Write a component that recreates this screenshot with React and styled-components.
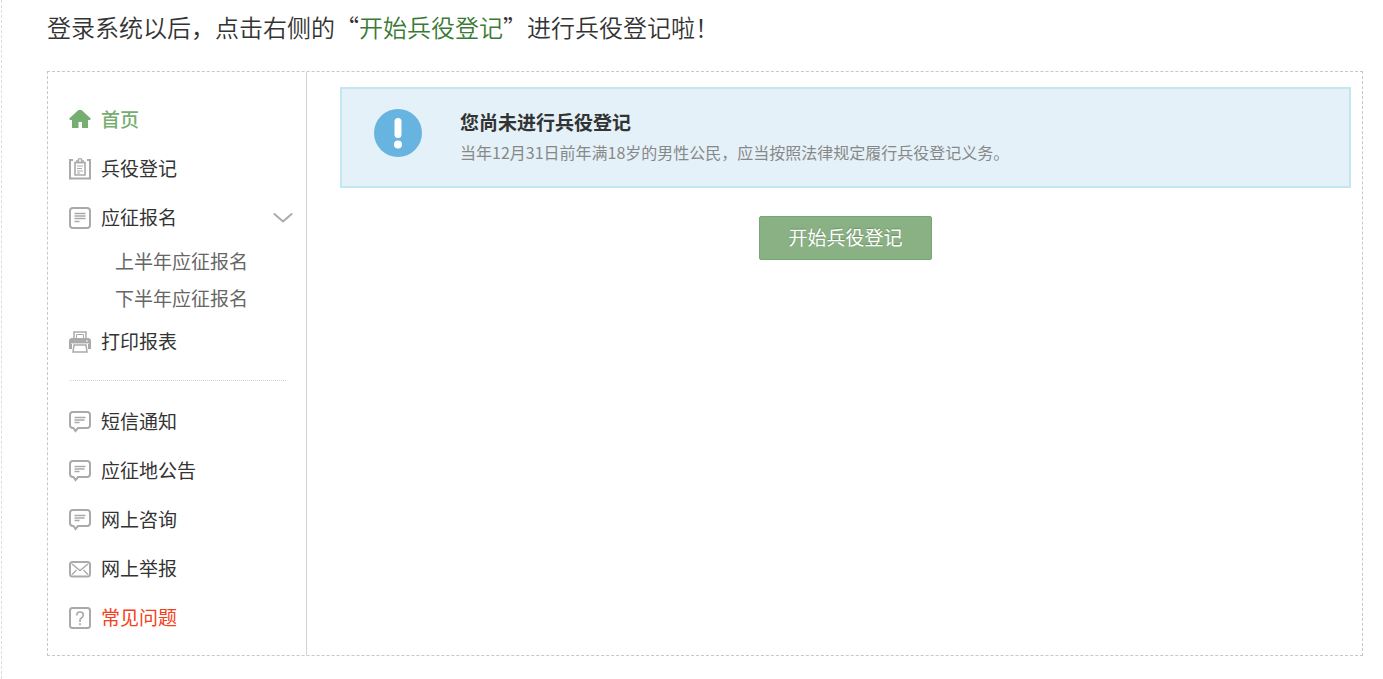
import React, { useState } from 'react';
import styled, { createGlobalStyle } from 'styled-components';


const GlobalStyle = createGlobalStyle`
  * {
    box-sizing: border-box;
  }

  body {
    margin: 0;
    background: #fff;
    color: #333;
    font-family: "Noto Sans CJK SC", sans-serif;
  }
`;

const Page = styled.article`
  min-height: 100vh;
  margin-left: 1px;
  padding: 7px 20px 23px 45px;
  border-left: 1px dashed #ddd;
`;

const Intro = styled.p`
  margin: 0 0 24px;
  font-size: 24px;
  font-weight: 350;
  line-height: 40px;
`;

const Highlight = styled.span`
  color: #3a7a35;
`;

const Panel = styled.section`
  display: flex;
  border: 1px dashed #c8c8c8;
`;

const Sidebar = styled.nav`
  flex: none;
  width: 259px;
  padding: 23px 0 13px;
  border-right: 1px solid #d4d4d4;
`;

const MenuItem = styled.a`
  display: flex;
  align-items: center;
  gap: 10px;
  width: 100%;
  height: 49px;
  padding: 0 13px 0 21px;
  border: 0;
  background: none;
  color: ${props => props.$color || '#333'};
  font-family: inherit;
  font-size: 19px;
  font-weight: ${props => props.$active ? 500 : 400};
  line-height: 28px;
  text-align: left;
  text-decoration: none;
  cursor: pointer;
`;

const MenuText = styled.span`
  flex: 1;
  padding-bottom: 2px;
`;

const SubMenu = styled.div`
  padding-bottom: 1px;
`;

const SubItem = styled.a`
  display: block;
  padding-left: 67px;
  color: #666;
  font-size: 19px;
  line-height: 37px;
  text-decoration: none;
`;

const Divider = styled.hr`
  margin: 14px 20px 16px 21px;
  border: 0;
  border-top: 1px dotted #d4d4d4;
`;

const Icon = styled.svg`
  flex: none;
  display: block;
  width: ${props => props.$size || 22}px;
  height: ${props => props.$size || 22}px;
  fill: none;
  stroke: #aaa;
  stroke-width: 2;
`;

const Main = styled.main`
  flex: 1;
  padding: 15px 11px 27px 33px;
`;

const Alert = styled.div`
  display: flex;
  align-items: flex-start;
  gap: 38px;
  padding: 20px 32px;
  border: 2px solid #c3e7ee;
  background: #e4f1f8;
`;

const AlertTitle = styled.h2`
  margin: 0;
  font-size: 19px;
  font-weight: 700;
  line-height: 26px;
`;

const AlertText = styled.p`
  margin: 3px 0 0;
  color: #888;
  font-size: 16px;
  line-height: 28px;
`;

const Actions = styled.div`
  display: flex;
  justify-content: center;
  margin-top: 28px;
`;

const StartButton = styled.button`
  padding: 6px 28px 8px;
  border: 1px solid #76a871;
  border-radius: 2px;
  background: #89b183;
  color: #fff;
  font-family: inherit;
  font-size: 19px;
  line-height: 28px;
  text-shadow: 0 -1px 1px rgba(0, 0, 0, 0.2);
  cursor: pointer;
`;


const HomeIcon = () => (
    <Icon viewBox="0 0 22 22" aria-hidden="true">
        <path d="M9.500 1h3l9.300 8.500-.8 1.500H19v8h-6v-6H9.500v6H3v-8H1l-.8-1.500z" fill="#76ad70" stroke="none" />
    </Icon>
);

const ClipboardIcon = () => (
    <Icon viewBox="0 0 22 22" aria-hidden="true">
        <path d="M4 2H1v18.500h20V2h-3" />
        <path d="M6 4.500h10v12.500H6z" strokeWidth="1.600" />
        <path d="M7.500 4.500V2.800h2V.8h3v2h2v1.700z" strokeWidth="1.300" />
        <path d="M8 8h6M8 10.500h5M8 13h6M8 15h3" strokeWidth="1.200" />
    </Icon>
);

const FormIcon = () => (
    <Icon viewBox="0 0 22 22" aria-hidden="true">
        <rect x="1" y="1" width="20" height="20" rx="3" />
        <path d="M5.500 6.500h11M5.500 9h11M5.500 11.500h11M5.500 14.500h5" strokeWidth="1.300" />
    </Icon>
);

const PrinterIcon = () => (
    <Icon viewBox="0 0 22 22" aria-hidden="true">
        <path d="M5 8V1h12v7" strokeWidth="1.500" />
        <path d="M7.500 7.500v-4h7v4" strokeWidth="1" />
        <path d="M3 7h16q3 0 3 3v8h-3v-5H3v5H0v-8q0-3 3-3z" fill="#aaa" stroke="none" />
        <path d="M2 12.500h18" stroke="#ddd" strokeWidth="1" />
        <path d="M5 14h12l1 7H4z" fill="#fff" strokeWidth="1.500" />
        <circle cx="18" cy="10" r=".8" fill="#fff" stroke="none" />
    </Icon>
);

const MessageIcon = () => (
    <Icon viewBox="0 0 22 22" aria-hidden="true">
        <path d="M4 1h14q3 0 3 3v10q0 3-3 3H9l-2.500 3L4.500 17H4q-3 0-3-3V4q0-3 3-3z" />
        <path d="M5.500 6.500h11M5.500 9h10M5.500 11.500h5" strokeWidth="1.300" />
    </Icon>
);

const MailIcon = () => (
    <Icon viewBox="0 0 22 22" aria-hidden="true">
        <rect x="1" y="4" width="20" height="14.500" rx="2.500" />
        <path d="M3 6l8 6.500L19 6M3 16.500l4.500-4.500M19 16.500L14.500 12" strokeWidth="1.400" />
    </Icon>
);

const QuestionIcon = () => (
    <Icon viewBox="0 0 22 22" aria-hidden="true">
        <rect x="1" y="1" width="20" height="20" rx="2.500" />
        <path d="M7.700 8.500q0-3.500 3.300-3.500t3.300 3q0 1.700-1.700 2.800T11 13.500v1.500M11 16.300v2" strokeWidth="1.700" />
    </Icon>
);

const ChevronIcon = () => (
    <Icon $size={20} viewBox="0 0 20 20" aria-hidden="true">
        <path d="M.8 5.500L10 13.500l9.200-8" />
    </Icon>
);

const NoticeIcon = () => (
    <Icon $size={48} viewBox="0 0 48 48" aria-hidden="true">
        <circle cx="24" cy="24" r="24" fill="#68b4e0" stroke="none" />
        <path d="M24 12.500v13" stroke="#fff" strokeWidth="7" strokeLinecap="round" />
        <circle cx="24" cy="35.500" r="4" fill="#fff" stroke="none" />
    </Icon>
);


const services = [
    { title: '短信通知', icon: MessageIcon },
    { title: '应征地公告', icon: MessageIcon },
    { title: '网上咨询', icon: MessageIcon },
    { title: '网上举报', icon: MailIcon },
    { title: '常见问题', icon: QuestionIcon, color: '#f5401c' }
];

const App = () => {
    const [opened, setOpened] = useState(true);

    return (
        <Page lang="zh-CN">
            <GlobalStyle />
            <Intro>登录系统以后，点击右侧的“<Highlight>开始兵役登记</Highlight>”进行兵役登记啦！</Intro>

            <Panel>
                <Sidebar>
                    <MenuItem href="#home" $active $color="#76ad70">
                        <HomeIcon />
                        <MenuText>首页</MenuText>
                    </MenuItem>
                    <MenuItem href="#register">
                        <ClipboardIcon />
                        <MenuText>兵役登记</MenuText>
                    </MenuItem>
                    <MenuItem as="button" type="button" aria-expanded={opened} onClick={() => setOpened(!opened)}>
                        <FormIcon />
                        <MenuText>应征报名</MenuText>
                        <ChevronIcon />
                    </MenuItem>
                    {opened ?
                        <SubMenu>
                            <SubItem href="#first-half">上半年应征报名</SubItem>
                            <SubItem href="#second-half">下半年应征报名</SubItem>
                        </SubMenu>
                        : null}
                    <MenuItem href="#print">
                        <PrinterIcon />
                        <MenuText>打印报表</MenuText>
                    </MenuItem>

                    <Divider />

                    {services.map(({ title, icon: ServiceIcon, color }) => (
                        <MenuItem href="#service" key={title} $color={color}>
                            <ServiceIcon />
                            <MenuText>{title}</MenuText>
                        </MenuItem>
                    ))}
                </Sidebar>

                <Main>
                    <Alert>
                        <NoticeIcon />
                        <div>
                            <AlertTitle>您尚未进行兵役登记</AlertTitle>
                            <AlertText>当年12月31日前年满18岁的男性公民，应当按照法律规定履行兵役登记义务。</AlertText>
                        </div>
                    </Alert>
                    <Actions>
                        <StartButton type="button">开始兵役登记</StartButton>
                    </Actions>
                </Main>
            </Panel>
        </Page>
    );
};

export default App;
